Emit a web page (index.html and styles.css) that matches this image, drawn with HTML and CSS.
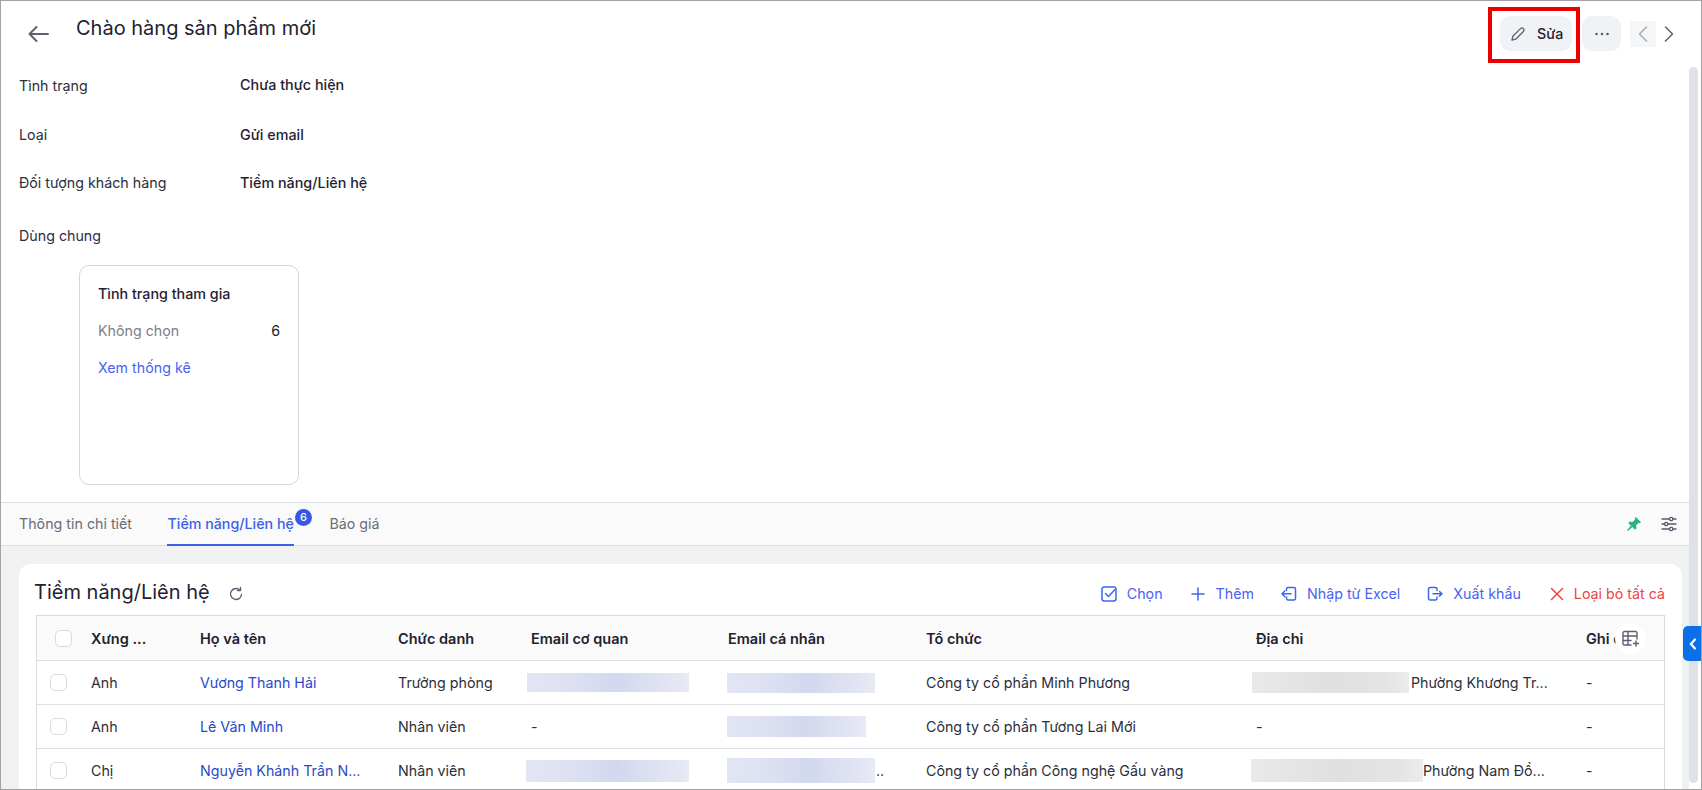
FILE: index.html
```html
<!DOCTYPE html>
<html lang="vi">
<head>
<meta charset="utf-8">
<title>Chào hàng sản phẩm mới</title>
<link rel="stylesheet" href="styles.css">
</head>
<body>
<div class="app">
  <header class="topbar">
    <div class="top-left">
      <button class="back" aria-label="Quay lại">
        <svg width="24" height="24" viewBox="0 0 24 24" fill="none" stroke="#5b6072" stroke-width="2" stroke-linecap="round" stroke-linejoin="round"><path d="M21 12H2.500M9.500 5l-7 7 7 7"/></svg>
      </button>
      <h1 class="title">Chào hàng sản phẩm mới</h1>
    </div>
    <div class="top-actions">
      <div class="highlight">
        <button class="btn-edit">
          <svg width="16" height="16" viewBox="0 0 16 16" fill="none" stroke="#5b6072" stroke-width="1.300" stroke-linecap="round" stroke-linejoin="round"><path d="M2 14l.8-3.700 7.700-7.700a2 2 0 0 1 2.900 2.900l-7.700 7.700z"/></svg>
          <span>Sửa</span>
        </button>
      </div>
      <button class="btn-more" aria-label="Thêm">
        <svg width="16" height="4" viewBox="0 0 16 4" fill="#5b6072"><circle cx="2.500" cy="2" r="1.300"/><circle cx="8" cy="2" r="1.300"/><circle cx="13.500" cy="2" r="1.300"/></svg>
      </button>
      <button class="pager pager-off" aria-label="Trước">
        <svg width="10" height="16" viewBox="0 0 10 16" fill="none" stroke="#a6abb8" stroke-width="1.500" stroke-linecap="round" stroke-linejoin="round"><path d="M8.500 1 1.500 8l7 7"/></svg>
      </button>
      <button class="pager" aria-label="Sau">
        <svg width="10" height="16" viewBox="0 0 10 16" fill="none" stroke="#5b6072" stroke-width="1.500" stroke-linecap="round" stroke-linejoin="round"><path d="M1.500 1l7 7-7 7"/></svg>
      </button>
    </div>
  </header>

  <section class="summary">
    <div class="field"><span class="label">Tình trạng</span><span class="value">Chưa thực hiện</span></div>
    <div class="field"><span class="label">Loại</span><span class="value">Gửi email</span></div>
    <div class="field"><span class="label">Đối tượng khách hàng</span><span class="value">Tiềm năng/Liên hệ</span></div>
    <div class="field field-shared"><span class="label">Dùng chung</span></div>
    <div class="stat-card">
      <div class="stat-title">Tình trạng tham gia</div>
      <div class="stat-row"><span class="stat-name">Không chọn</span><span class="stat-num">6</span></div>
      <a class="stat-link">Xem thống kê</a>
    </div>
  </section>

  <nav class="tabs">
    <div class="tab-list">
      <a class="tab">Thông tin chi tiết</a>
      <a class="tab tab-active">Tiềm năng/Liên hệ<span class="badge">6</span></a>
      <a class="tab">Báo giá</a>
    </div>
    <div class="tab-tools">
      <svg width="16" height="16" viewBox="0 0 16 16" fill="#2fb08c"><path d="M9.800 1 15 6.200l-1.100 1.100-1.300-.4L10 9.600l.5 2.700-1.500 1.500L2.200 7l1.500-1.500 2.700.5L9.100 3.400l-.4-1.300z"/><path d="M5 9.600 6.400 11 1.800 15l-.8-.8z"/></svg>
      <svg width="16" height="16" viewBox="0 0 16 16" fill="none" stroke="#555a6b" stroke-width="1.300" stroke-linecap="round"><path d="M1 3h7.500M12 3h3M1 8h2.500M7 8h8M1 13h7.500M12 13h3"/><circle cx="10.200" cy="3" r="1.700"/><circle cx="5.200" cy="8" r="1.700"/><circle cx="10.200" cy="13" r="1.700"/></svg>
    </div>
  </nav>

  <main class="content">
    <section class="panel">
      <div class="panel-head">
        <div class="panel-title">
          <h2>Tiềm năng/Liên hệ</h2>
          <svg class="refresh" width="16" height="16" viewBox="0 0 16 16" fill="none" stroke="#5b6072" stroke-width="1.400" stroke-linecap="round" stroke-linejoin="round"><path d="M13.500 8.500a5.500 5.500 0 1 1-1.500-4.300"/><path d="M12.500 1.500v3h-3"/></svg>
        </div>
        <div class="panel-actions">
          <a class="action">
            <svg width="16" height="16" viewBox="0 0 16 16" fill="none" stroke="#3f66f0" stroke-width="1.500" stroke-linecap="round" stroke-linejoin="round"><rect x="1" y="1" width="14" height="14" rx="2.200"/><path d="M4.500 7.500 7.500 10.500 14 3.500"/></svg>
            <span>Chọn</span>
          </a>
          <a class="action">
            <svg width="16" height="16" viewBox="0 0 16 16" fill="none" stroke="#3f66f0" stroke-width="1.500" stroke-linecap="round"><path d="M8 2v12M2 8h12"/></svg>
            <span>Thêm</span>
          </a>
          <a class="action">
            <svg width="16" height="16" viewBox="0 0 16 16" fill="none" stroke="#3f66f0" stroke-width="1.500" stroke-linecap="round" stroke-linejoin="round"><path d="M5.500 4.500V3A1.500 1.500 0 0 1 7 1.500h6A1.500 1.500 0 0 1 14.500 3v9.500A1.500 1.500 0 0 1 13 14H7a1.500 1.500 0 0 1-1.500-1.500V11"/><path d="M10 7.800H1M3.800 5 1 7.800l2.800 2.800"/></svg>
            <span>Nhập từ Excel</span>
          </a>
          <a class="action">
            <svg width="16" height="16" viewBox="0 0 16 16" fill="none" stroke="#3f66f0" stroke-width="1.500" stroke-linecap="round" stroke-linejoin="round"><path d="M10 4.500V3a1.500 1.500 0 0 0-1.500-1.500H3A1.500 1.500 0 0 0 1.500 3v9.500A1.500 1.500 0 0 0 3 14h5.500a1.500 1.500 0 0 0 1.500-1.500V11"/><path d="M6 7.800h9M12.500 5.500l2.500 2.300-2.500 2.300"/></svg>
            <span>Xuất khẩu</span>
          </a>
          <a class="action action-danger">
            <svg width="16" height="16" viewBox="0 0 16 16" fill="none" stroke="#ee4444" stroke-width="1.500" stroke-linecap="round"><path d="M2.500 2.500l11 11M13.500 2.500l-11 11"/></svg>
            <span>Loại bỏ tất cả</span>
          </a>
        </div>
      </div>

      <div class="grid">
        <div class="row row-head">
          <div class="cell cell-check"><span class="check check-head"></span></div>
          <div class="cell">Xưng ...</div>
          <div class="cell">Họ và tên</div>
          <div class="cell">Chức danh</div>
          <div class="cell">Email cơ quan</div>
          <div class="cell">Email cá nhân</div>
          <div class="cell">Tổ chức</div>
          <div class="cell">Địa chỉ</div>
          <div class="cell">Ghi chú</div>
          <span class="col-add">
            <svg width="17" height="17" viewBox="0 0 17 17" fill="none" stroke="#5b6072" stroke-width="1.400" stroke-linecap="round" stroke-linejoin="round"><path d="M15 9V3a1.500 1.500 0 0 0-1.500-1.500h-11A1.500 1.500 0 0 0 1 3v10.500A1.500 1.500 0 0 0 2.500 15H9M1 6h14M6 1.500V15M1 10.500h8M11.500 13.500h5M14 11v5"/></svg>
          </span>
        </div>

        <div class="row">
          <div class="cell cell-check"><span class="check"></span></div>
          <div class="cell">Anh</div>
          <div class="cell"><a class="name">Vương Thanh Hải</a></div>
          <div class="cell">Trưởng phòng</div>
          <div class="cell"><span class="mask mask-blue m-a"></span></div>
          <div class="cell"><span class="mask mask-blue m-b"></span></div>
          <div class="cell">Công ty cổ phần Minh Phương</div>
          <div class="cell"><span class="mask mask-gray m-d"></span><span>Phường Khương Tr...</span></div>
          <div class="cell">-</div>
        </div>

        <div class="row">
          <div class="cell cell-check"><span class="check"></span></div>
          <div class="cell">Anh</div>
          <div class="cell"><a class="name">Lê Văn Minh</a></div>
          <div class="cell">Nhân viên</div>
          <div class="cell">-</div>
          <div class="cell"><span class="mask mask-blue m-c"></span></div>
          <div class="cell">Công ty cổ phần Tương Lai Mới</div>
          <div class="cell">-</div>
          <div class="cell">-</div>
        </div>

        <div class="row">
          <div class="cell cell-check"><span class="check"></span></div>
          <div class="cell">Chị</div>
          <div class="cell"><a class="name">Nguyễn Khánh Trần N...</a></div>
          <div class="cell">Nhân viên</div>
          <div class="cell"><span class="mask mask-blue m-e"></span></div>
          <div class="cell"><span class="mask mask-blue m-f"></span><span>..</span></div>
          <div class="cell">Công ty cổ phần Công nghệ Gấu vàng</div>
          <div class="cell"><span class="mask mask-gray m-g"></span><span>Phường Nam Đồ...</span></div>
          <div class="cell">-</div>
        </div>
      </div>
    </section>
  </main>

  <div class="scroll-thumb"></div>
  <button class="side-tab" aria-label="Mở">
    <svg width="8" height="12" viewBox="0 0 8 12" fill="none" stroke="#fff" stroke-width="2.200" stroke-linecap="round" stroke-linejoin="round"><path d="M6 1.500 1.800 6 6 10.500"/></svg>
  </button>
</div>
</body>
</html>
```
FILE: styles.css
```css
* { box-sizing: border-box; }
html, body { margin: 0; padding: 0; height: 100%; overflow: hidden; }
body { font-family: Inter, "Noto Sans", sans-serif; font-size: 14.25px; color: #1f2230; background: #fff; }
button { font: inherit; border: 0; padding: 0; background: none; color: inherit; }
a { color: inherit; text-decoration: none; }

.app { position: relative; width: 1702px; height: 790px; border: 1px solid #a3a3a3; display: flex; flex-direction: column; overflow: hidden; background: #fff; }

.topbar { height: 64px; flex: none; display: flex; justify-content: space-between; padding: 0 19px 0 0; }
.top-left { display: flex; align-items: flex-start; }
.back { width: 24px; height: 24px; margin: 21px 0 0 26px; display: flex; }
.title { margin: 14px 0 0 25px; font-size: 20px; line-height: 26px; font-weight: 400; }
.top-actions { display: flex; align-items: flex-start; }
.highlight { border: 4px solid #ee0000; width: 92px; height: 56px; margin-top: 6px; padding: 5px 0 0 8px; }
.btn-edit { width: 72px; height: 35px; border-radius: 10px; background: #f1f2f5; display: flex; align-items: center; padding-left: 10px; gap: 11px; font-weight: 500; }
.btn-more { width: 39px; height: 35px; border-radius: 10px; background: #f1f2f5; margin: 15px 0 0 2px; display: flex; align-items: center; justify-content: center; }
.pager { width: 26px; height: 26px; margin-top: 20px; display: flex; align-items: center; justify-content: center; }
.pager-off { background: #f5f6f8; margin-left: 9px; }

.summary { flex: none; height: 437px; padding-left: 18px; }
.field { display: flex; height: 48.500px; padding-top: 11px; line-height: 20px; }
.label { width: 221px; color: #2b2e3b; }
.value { font-size: 14.350px; font-weight: 500; }
.field:first-child .value { margin-top: -1px; }
.field-shared { height: 54.500px; padding-top: 15.500px; }
.stat-card { width: 220px; height: 220px; margin-left: 60px; border: 1px solid #d5d6da; border-radius: 10px; padding: 18px; }
.stat-title { font-size: 14.300px; font-weight: 500; line-height: 20px; }
.stat-row { display: flex; justify-content: space-between; margin-top: 17px; line-height: 20px; }
.stat-name { color: #7d7f87; }
.stat-link { display: block; margin-top: 17px; line-height: 20px; color: #4a62f2; }

.tabs { flex: none; height: 44px; background: #fafafa; border-top: 1px solid #dfe0e3; border-bottom: 1px solid #dfe0e3; display: flex; justify-content: space-between; padding: 0 12px 0 18px; margin-right: 12px; }
.tab-list { display: flex; gap: 35.500px; }
.tab { position: relative; height: 43px; line-height: 42px; color: #6a6c76; }
.tab-active { color: #3f5fe8; border-bottom: 2px solid #3f5fe8; font-weight: 500; }
.badge { position: absolute; top: 6px; right: -18px; width: 17px; height: 17px; border-radius: 50%; background: #3558e6; color: #fff; font-size: 11px; line-height: 17px; text-align: center; font-weight: 500; }
.tab-tools { display: flex; align-items: center; gap: 19px; }

.content { flex: 1; background: #f0f1f3; padding: 18px 7px 0 18px; margin-right: 12px; min-height: 0; }
.panel { background: #fff; border-radius: 12px 12px 0 0; height: 100%; padding: 0 17px; overflow: hidden; }
.panel-head { height: 51px; display: flex; justify-content: space-between; align-items: center; padding-top: 4px; margin-left: -2px; }
.panel-title { display: flex; align-items: center; gap: 18px; }
.panel-title h2 { margin: 0; font-size: 20px; font-weight: 400; line-height: 26px; }
.refresh { margin-top: 4px; }
.panel-actions { display: flex; gap: 27px; margin-top: 4px; }
.action { display: flex; align-items: center; gap: 10px; color: #4a62f2; line-height: 20px; }
.action-danger { color: #ee4444; gap: 9px; margin-left: 1px; }

.grid { border: 1px solid #d9dadd; border-bottom: 0; }
.row { position: relative; display: grid; grid-template-columns: 54px 109px 198px 133px 197px 198px 330px 330px 1fr; height: 44px; border-top: 1px solid #dfe0e3; align-items: center; color: #2b2e3b; }
.row-head { border-top: 0; background: #fafafa; font-size: 14.500px; font-weight: 600; color: #1f2230; }
.cell { display: flex; align-items: center; white-space: nowrap; min-width: 0; }
.cell-check { padding-left: 13px; }
.check { width: 17px; height: 17px; border: 1px solid #d9dadd; border-radius: 5px; background: #fff; }
.check-head { margin-left: 5px; }
.name { color: #2a49c9; }
.col-add { position: absolute; right: 18px; top: 7px; width: 31px; height: 31px; border-radius: 50%; background: #fff; display: flex; align-items: center; justify-content: center; }

.mask { display: block; flex: none; margin-left: -4px; }
.mask-blue { background: linear-gradient(90deg, #e2e5f3 0%, #dde0f2 30%, #d2d8ee 55%, #e0e3f2 85%, #e8eaf4 100%); }
.mask-gray { background: linear-gradient(90deg, #e9e9ea 0%, #e0e0e1 50%, #e4e4e5 85%, #ececed 100%); }
.m-a { width: 162px; height: 19px; }
.m-b { width: 148px; height: 20px; margin-left: -1px; }
.m-c { width: 139px; height: 21px; margin-left: -1px; }
.m-d { width: 157px; height: 21px; margin-right: 2px; }
.m-e { width: 163px; height: 22px; margin-left: -5px; }
.m-f { width: 148px; height: 25px; margin-left: -1px; margin-right: 1px; }
.m-g { width: 172px; height: 23px; margin-left: -5px; }

.scroll-thumb { position: absolute; left: 1688px; top: 66px; width: 9px; height: 716px; background: #dfe1e8; border-radius: 5px; }
.side-tab { position: absolute; left: 1682px; top: 625px; width: 19px; height: 35px; background: #0b6fe8; border-radius: 5px 0 0 5px; display: flex; align-items: center; justify-content: center; }
```
